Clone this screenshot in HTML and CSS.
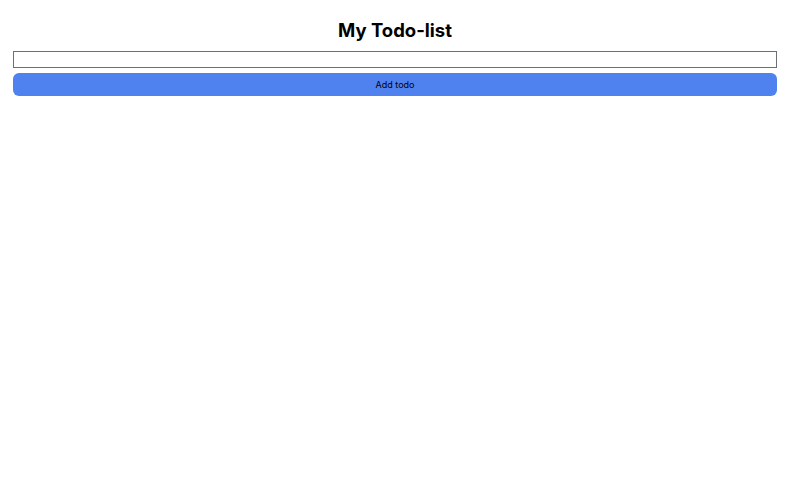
FILE: index.html
```html
<!DOCTYPE html>
<html>
<head>
<meta charset="utf-8">
<link rel="stylesheet" href="styles.css">
</head>
<body>
<div class="app">
  <h1 class="title">My Todo-list</h1>
  <form class="form">
    <input class="input" type="text">
    <button class="btn" type="button">Add todo</button>
  </form>
</div>
</body>
</html>
```
FILE: styles.css
```css
html, body { margin: 0; padding: 0; background: #fff; }
body { font-family: Inter, "Noto Sans", sans-serif; }
.app { padding: 19px 11px 0 13px; }
.title {
  margin: 0 0 10px;
  text-align: center;
  font-size: 18.5px;
  font-weight: 700;
  line-height: 22px;
  color: #000;
}
.form { display: flex; flex-direction: column; gap: 5px; }
.input {
  margin: 0;
  height: 17px;
  box-sizing: border-box;
  border: 1px solid #6b6f78;
  outline: none;
  padding: 0 2px;
  background: #fff;
}
.btn {
  margin: 0;
  height: 23px;
  border: none;
  border-radius: 6px;
  background: #5082ef;
  color: #000;
  font-family: Inter, "Noto Sans", sans-serif;
  font-size: 9px;
  padding: 0;
}
```
